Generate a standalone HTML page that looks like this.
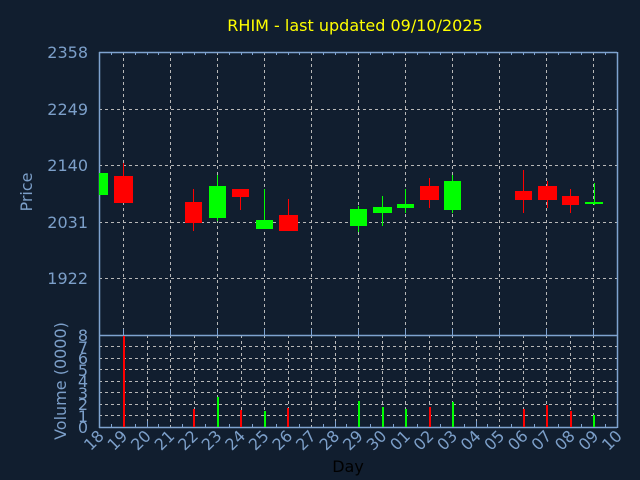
<!DOCTYPE html>
<html><head><meta charset="utf-8"><style>
html,body{margin:0;padding:0;background:#111e2f;}
svg{display:block;font-family:"DejaVu Sans","Liberation Sans",sans-serif;}
</style></head><body>
<svg width="640" height="480" viewBox="0 0 640 480" xmlns="http://www.w3.org/2000/svg">
<rect width="640" height="480" fill="#111e2f"/>
<text x="355" y="31" fill="#ffff00" font-size="16" text-anchor="middle">RHIM - last updated 09/10/2025</text>
<!-- main grid -->
<g stroke="#b8b8b8" stroke-width="1" stroke-dasharray="3,3" fill="none">
<line x1="99" y1="109.5" x2="617" y2="109.5"/>
<line x1="99" y1="165.5" x2="617" y2="165.5"/>
<line x1="99" y1="222.5" x2="617" y2="222.5"/>
<line x1="99" y1="278.5" x2="617" y2="278.5"/>
<line x1="123.5" y1="52" x2="123.5" y2="334"/>
<line x1="170.5" y1="52" x2="170.5" y2="334"/>
<line x1="217.5" y1="52" x2="217.5" y2="334"/>
<line x1="264.5" y1="52" x2="264.5" y2="334"/>
<line x1="311.5" y1="52" x2="311.5" y2="334"/>
<line x1="358.5" y1="52" x2="358.5" y2="334"/>
<line x1="405.5" y1="52" x2="405.5" y2="334"/>
<line x1="452.5" y1="52" x2="452.5" y2="334"/>
<line x1="499.5" y1="52" x2="499.5" y2="334"/>
<line x1="546.5" y1="52" x2="546.5" y2="334"/>
<line x1="593.5" y1="52" x2="593.5" y2="334"/>
</g>
<!-- volume grid -->
<g stroke="#b8b8b8" stroke-width="1" stroke-dasharray="3,3" fill="none">
<line x1="99" y1="346.5" x2="617" y2="346.5"/>
<line x1="99" y1="358.5" x2="617" y2="358.5"/>
<line x1="99" y1="369.5" x2="617" y2="369.5"/>
<line x1="99" y1="381.5" x2="617" y2="381.5"/>
<line x1="99" y1="392.5" x2="617" y2="392.5"/>
<line x1="99" y1="404.5" x2="617" y2="404.5"/>
<line x1="99" y1="415.5" x2="617" y2="415.5"/>
<line x1="123.5" y1="335" x2="123.5" y2="427"/>
<line x1="147.5" y1="335" x2="147.5" y2="427"/>
<line x1="170.5" y1="335" x2="170.5" y2="427"/>
<line x1="194.5" y1="335" x2="194.5" y2="427"/>
<line x1="217.5" y1="335" x2="217.5" y2="427"/>
<line x1="241.5" y1="335" x2="241.5" y2="427"/>
<line x1="264.5" y1="335" x2="264.5" y2="427"/>
<line x1="288.5" y1="335" x2="288.5" y2="427"/>
<line x1="311.5" y1="335" x2="311.5" y2="427"/>
<line x1="335.5" y1="335" x2="335.5" y2="427"/>
<line x1="358.5" y1="335" x2="358.5" y2="427"/>
<line x1="382.5" y1="335" x2="382.5" y2="427"/>
<line x1="405.5" y1="335" x2="405.5" y2="427"/>
<line x1="429.5" y1="335" x2="429.5" y2="427"/>
<line x1="452.5" y1="335" x2="452.5" y2="427"/>
<line x1="476.5" y1="335" x2="476.5" y2="427"/>
<line x1="499.5" y1="335" x2="499.5" y2="427"/>
<line x1="523.5" y1="335" x2="523.5" y2="427"/>
<line x1="546.5" y1="335" x2="546.5" y2="427"/>
<line x1="570.5" y1="335" x2="570.5" y2="427"/>
<line x1="593.5" y1="335" x2="593.5" y2="427"/>
</g>
<!-- frames -->
<g stroke="#7fa3d0" stroke-width="1.5" fill="none">
<line x1="99" y1="52.5" x2="617" y2="52.5"/>
<line x1="99.5" y1="52" x2="99.5" y2="428"/>
<line x1="617.5" y1="52" x2="617.5" y2="428"/>
<line x1="99" y1="335.5" x2="617" y2="335.5"/>
<line x1="99" y1="427.5" x2="617" y2="427.5"/>
</g>
<!-- ticks -->
<g stroke="#7fa3d0" stroke-width="1">
<path d="M111.5 52v3M135.5 52v3M147.5 52v3M158.5 52v3M182.5 52v3M194.5 52v3M205.5 52v3M229.5 52v3M241.5 52v3M252.5 52v3M276.5 52v3M288.5 52v3M299.5 52v3M323.5 52v3M335.5 52v3M346.5 52v3M370.5 52v3M382.5 52v3M393.5 52v3M417.5 52v3M429.5 52v3M440.5 52v3M464.5 52v3M476.5 52v3M487.5 52v3M511.5 52v3M523.5 52v3M534.5 52v3M558.5 52v3M570.5 52v3M581.5 52v3M605.5 52v3"/>
<path d="M123.5 335v-6M170.5 335v-6M217.5 335v-6M264.5 335v-6M311.5 335v-6M358.5 335v-6M405.5 335v-6M452.5 335v-6M499.5 335v-6M546.5 335v-6M593.5 335v-6"/>
<path d="M111.5 427v-3M135.5 427v-3M158.5 427v-3M182.5 427v-3M205.5 427v-3M229.5 427v-3M252.5 427v-3M276.5 427v-3M299.5 427v-3M323.5 427v-3M346.5 427v-3M370.5 427v-3M393.5 427v-3M417.5 427v-3M440.5 427v-3M464.5 427v-3M487.5 427v-3M511.5 427v-3M534.5 427v-3M558.5 427v-3M581.5 427v-3M605.5 427v-3"/>
<path d="M147.5 427v-6M194.5 427v-6M241.5 427v-6M288.5 427v-6M335.5 427v-6M382.5 427v-6M429.5 427v-6M476.5 427v-6M523.5 427v-6M570.5 427v-6"/>
</g>
<!-- candles -->
<g>
<rect x="99" y="173" width="9" height="22" fill="#00ff00"/>
<line x1="123.5" y1="163" x2="123.5" y2="176" stroke="#ff0000"/><rect x="114" y="176" width="19" height="27" fill="#ff0000"/>
<line x1="193.5" y1="189" x2="193.5" y2="231" stroke="#ff0000"/><rect x="185" y="202" width="17" height="21" fill="#ff0000"/>
<line x1="217.5" y1="175" x2="217.5" y2="221" stroke="#00ff00"/><rect x="209" y="186" width="17" height="32" fill="#00ff00"/>
<line x1="240.5" y1="189" x2="240.5" y2="210" stroke="#ff0000"/><rect x="232" y="189" width="17" height="8" fill="#ff0000"/>
<line x1="264.5" y1="189" x2="264.5" y2="229" stroke="#00ff00"/><rect x="256" y="220" width="17" height="9" fill="#00ff00"/>
<line x1="288.5" y1="199" x2="288.5" y2="231" stroke="#ff0000"/><rect x="279" y="215" width="19" height="16" fill="#ff0000"/>
<line x1="358.5" y1="206" x2="358.5" y2="232" stroke="#00ff00"/><rect x="350" y="209" width="17" height="17" fill="#00ff00"/>
<line x1="382.5" y1="196" x2="382.5" y2="226" stroke="#00ff00"/><rect x="373" y="207" width="19" height="6" fill="#00ff00"/>
<line x1="405.5" y1="189" x2="405.5" y2="213" stroke="#00ff00"/><rect x="397" y="204" width="17" height="4" fill="#00ff00"/>
<line x1="429.5" y1="178" x2="429.5" y2="208" stroke="#ff0000"/><rect x="420" y="186" width="19" height="14" fill="#ff0000"/>
<line x1="452.5" y1="175" x2="452.5" y2="213" stroke="#00ff00"/><rect x="444" y="181" width="17" height="29" fill="#00ff00"/>
<line x1="523.5" y1="170" x2="523.5" y2="213" stroke="#ff0000"/><rect x="515" y="191" width="17" height="9" fill="#ff0000"/>
<line x1="547.5" y1="181" x2="547.5" y2="208" stroke="#ff0000"/><rect x="538" y="186" width="19" height="14" fill="#ff0000"/>
<line x1="570.5" y1="189" x2="570.5" y2="213" stroke="#ff0000"/><rect x="562" y="196" width="17" height="9" fill="#ff0000"/>
<line x1="594.5" y1="183" x2="594.5" y2="205" stroke="#00ff00"/><rect x="585" y="202" width="18" height="2" fill="#00ff00"/>
</g>
<!-- volume bars -->
<g>
<rect x="123" y="336" width="2" height="91" fill="#ff0000"/>
<rect x="193" y="409" width="2" height="18" fill="#ff0000"/>
<rect x="217" y="397" width="2" height="30" fill="#00ff00"/>
<rect x="240" y="410" width="2" height="17" fill="#ff0000"/>
<rect x="264" y="411" width="2" height="16" fill="#00ff00"/>
<rect x="287" y="408" width="2" height="19" fill="#ff0000"/>
<rect x="358" y="401" width="2" height="26" fill="#00ff00"/>
<rect x="382" y="407" width="2" height="20" fill="#00ff00"/>
<rect x="405" y="409" width="2" height="18" fill="#00ff00"/>
<rect x="429" y="407" width="2" height="20" fill="#ff0000"/>
<rect x="452" y="402" width="2" height="25" fill="#00ff00"/>
<rect x="523" y="409" width="2" height="18" fill="#ff0000"/>
<rect x="546" y="405" width="2" height="22" fill="#ff0000"/>
<rect x="570" y="411" width="2" height="16" fill="#ff0000"/>
<rect x="593" y="415" width="2" height="12" fill="#00ff00"/>
</g>
<!-- y labels -->
<g fill="#7c9fc9" font-size="16" text-anchor="end">
<text x="88" y="58">2358</text>
<text x="88" y="115">2249</text>
<text x="88" y="171">2140</text>
<text x="88" y="228">2031</text>
<text x="88" y="284">1922</text>
<text x="88" y="341">8</text>
<text x="88" y="353">7</text>
<text x="88" y="364">6</text>
<text x="88" y="376">5</text>
<text x="88" y="387">4</text>
<text x="88" y="399">3</text>
<text x="88" y="410">2</text>
<text x="88" y="422">1</text>
<text x="88" y="433">0</text>
</g>
<text transform="translate(32,192) rotate(-90)" fill="#7c9fc9" font-size="16" text-anchor="middle">Price</text>
<text transform="translate(66,381) rotate(-90)" fill="#7c9fc9" font-size="16" text-anchor="middle">Volume (0000)</text>
<!-- x labels -->
<g fill="#7c9fc9" font-size="16" text-anchor="end">
<text transform="translate(105,437) rotate(-45)">18</text>
<text transform="translate(128.5,437) rotate(-45)">19</text>
<text transform="translate(152,437) rotate(-45)">20</text>
<text transform="translate(175.6,437) rotate(-45)">21</text>
<text transform="translate(199.2,437) rotate(-45)">22</text>
<text transform="translate(222.7,437) rotate(-45)">23</text>
<text transform="translate(246.3,437) rotate(-45)">24</text>
<text transform="translate(269.8,437) rotate(-45)">25</text>
<text transform="translate(293.4,437) rotate(-45)">26</text>
<text transform="translate(317,437) rotate(-45)">27</text>
<text transform="translate(340.5,437) rotate(-45)">28</text>
<text transform="translate(364,437) rotate(-45)">29</text>
<text transform="translate(387.6,437) rotate(-45)">30</text>
<text transform="translate(411.2,437) rotate(-45)">01</text>
<text transform="translate(434.7,437) rotate(-45)">02</text>
<text transform="translate(458.3,437) rotate(-45)">03</text>
<text transform="translate(481.8,437) rotate(-45)">04</text>
<text transform="translate(505.4,437) rotate(-45)">05</text>
<text transform="translate(529,437) rotate(-45)">06</text>
<text transform="translate(552.5,437) rotate(-45)">07</text>
<text transform="translate(576,437) rotate(-45)">08</text>
<text transform="translate(599.6,437) rotate(-45)">09</text>
<text transform="translate(623,437) rotate(-45)">10</text>
</g>
<text x="348" y="472" fill="#000000" font-size="16" text-anchor="middle">Day</text>
</svg>
</body></html>
